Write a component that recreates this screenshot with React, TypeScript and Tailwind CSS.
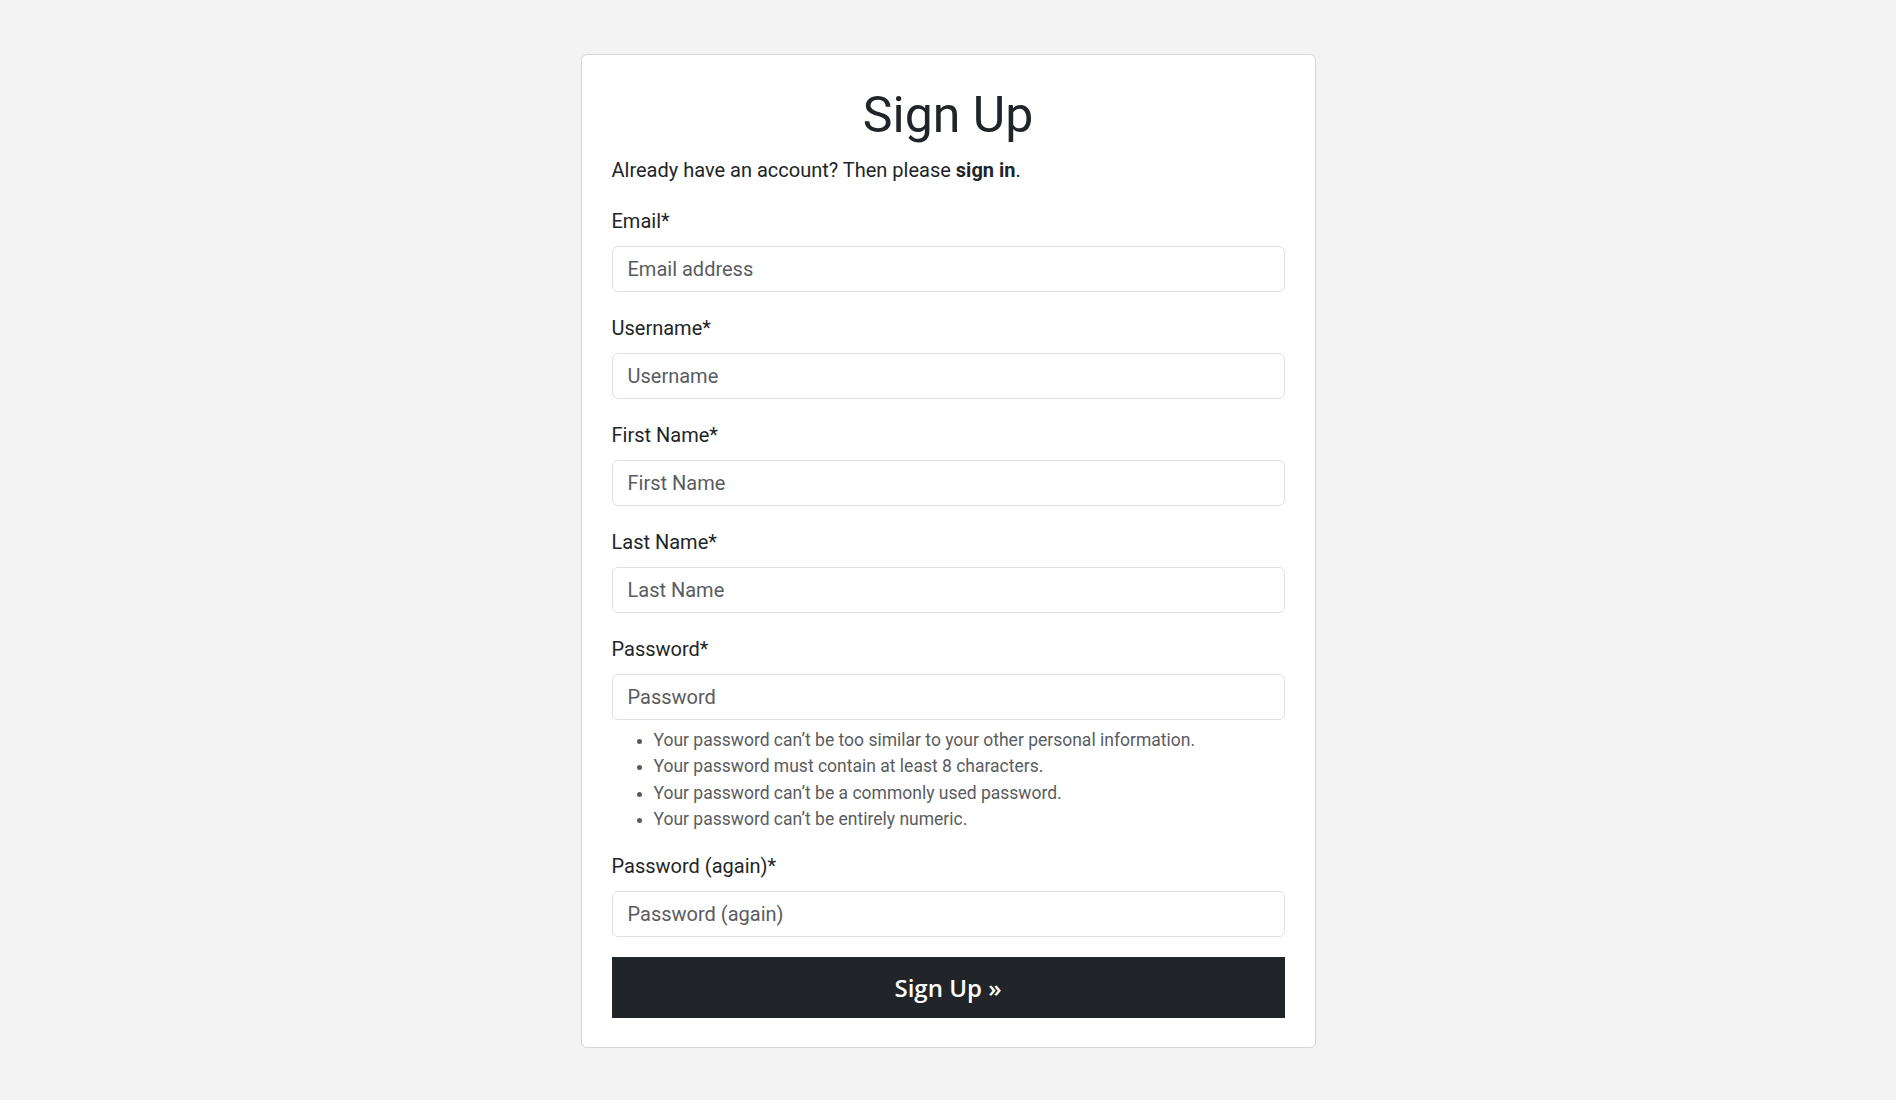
import React from "react";

const fields = [
  { label: "Email*", placeholder: "Email address", type: "email" },
  { label: "Username*", placeholder: "Username", type: "text" },
  { label: "First Name*", placeholder: "First Name", type: "text" },
  { label: "Last Name*", placeholder: "Last Name", type: "text" },
];

const passwordHelp = [
  "Your password can\u2019t be too similar to your other personal information.",
  "Your password must contain at least 8 characters.",
  "Your password can\u2019t be a commonly used password.",
  "Your password can\u2019t be entirely numeric.",
];

function Field({ label, placeholder, type }: { label: string; placeholder: string; type: string }) {
  return (
    <div className="flex flex-col">
      <label className="mb-[10px] text-[20px] leading-[30px] text-[#212529]">{label}</label>
      <input
        type={type}
        placeholder={placeholder}
        className="h-[46px] w-full rounded-[6px] border border-[#dee2e6] bg-white px-[15px] text-[20px] text-[#212529] outline-none placeholder:text-[#595c5f]"
      />
    </div>
  );
}

export default function App() {
  return (
    <div className="min-h-screen bg-[#f3f3f3] pt-[54px] font-['Roboto',_'Liberation_Sans',_sans-serif]">
      <div className="mx-auto w-[735px] rounded-[6px] border border-[#d6d6d6] bg-white px-[30px] pt-[30px] pb-[29px]">
        <h1 className="text-center text-[50px] leading-[1.2] font-normal text-[#212529]">Sign Up</h1>
        <p className="mt-[10px] text-[20px] leading-[30px] text-[#212529]">
          Already have an account? Then please{" "}
          <a href="#" className="font-bold text-[#212529]">
            sign in
          </a>
          .
        </p>

        <form className="mt-[21px] flex flex-col">
          <div className="flex flex-col gap-[21px]">
            {fields.map((f) => (
              <Field key={f.label} {...f} />
            ))}
            <Field label="Password*" placeholder="Password" type="password" />
          </div>

          <ul className="mt-[7px] list-disc pl-[42px] text-[17.5px] leading-[1.5] text-[#595c5f]">
            {passwordHelp.map((t) => (
              <li key={t}>{t}</li>
            ))}
          </ul>

          <div className="mt-[19px]">
            <Field label="Password (again)*" placeholder="Password (again)" type="password" />
          </div>

          <button
            type="submit"
            className="mt-[20px] h-[61px] w-full bg-[#212529] font-['Open_Sans',_sans-serif] text-[24px] font-semibold text-white"
          >
            Sign Up »
          </button>
        </form>
      </div>
    </div>
  );
}
